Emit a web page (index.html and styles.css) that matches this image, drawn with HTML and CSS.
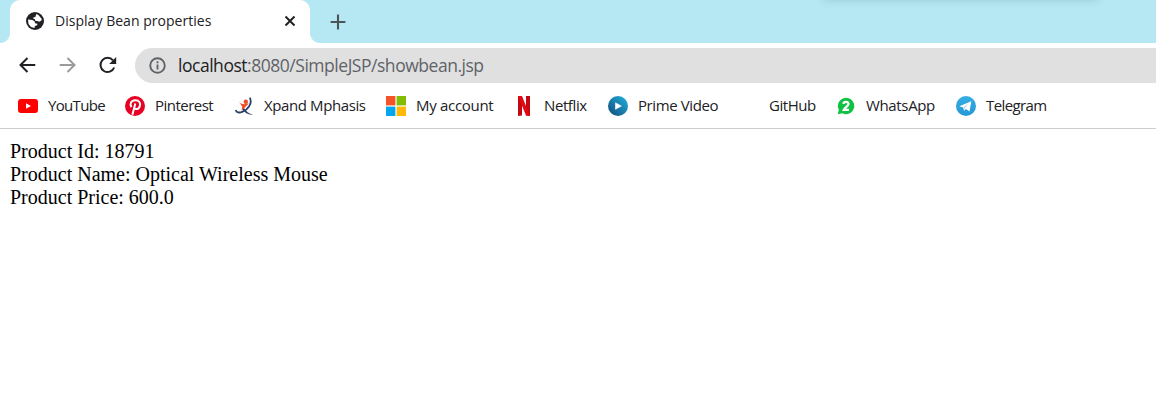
FILE: index.html
```
<!DOCTYPE html>
<html lang="en">
<head>
<meta charset="utf-8">
<title>Display Bean properties</title>
<link rel="stylesheet" href="styles.css">
</head>
<body>
<header class="tabstrip">
  <div class="tab">
    <svg class="globe" viewBox="0 0 18 18"><circle cx="9" cy="9" r="9" fill="#202124"/><path d="M10.2 2.1 12.4 3 15.8 7.1 15.4 8.4 13.2 9.8 11.2 9 9.4 8.9 8.9 7.2 7.1 6.6 7.3 5.4 9.4 5.1Z" fill="#fff"/><path d="M2 7.6 6.5 8 8.7 9.6 9.1 11.3 11.5 11.7 11.1 13.2 8.9 14.1 8.5 16.1 5 14.9 2.5 11.9Z" fill="#fff"/></svg>
    <span class="tab-title">Display Bean properties</span>
    <svg class="close" viewBox="0 0 12 12"><path d="M1.5 1.5 10.5 10.5M10.5 1.5 1.5 10.5" stroke="#202124" stroke-width="2" fill="none"/></svg>
  </div>
  <svg class="plus" viewBox="0 0 16 16"><path d="M8 .6V15.4M.6 8H15.4" stroke="#4b5557" stroke-width="2.1" fill="none"/></svg>
  <div class="shade"></div>
</header>
<div class="toolbar">
  <svg class="nav" viewBox="0 0 20 20"><path d="M18.3 10H3.5M10.5 3 3.5 10 10.5 17" stroke="#202124" stroke-width="2" fill="none"/></svg>
  <svg class="nav" viewBox="0 0 20 20"><path d="M2.7 10H17.5M10.5 3 17.5 10 10.5 17" stroke="#9b9b9d" stroke-width="2" fill="none"/></svg>
  <svg class="nav" viewBox="0 0 20 20"><path d="M17.2 12.5A7.1 7.1 0 1 1 16 5.3" stroke="#202124" stroke-width="2" fill="none"/><path d="M19.2 2V9H12.2Z" fill="#202124"/></svg>
  <div class="omnibox">
    <svg class="info" viewBox="0 0 18 18"><circle cx="9" cy="9" r="7.7" stroke="#5f6368" stroke-width="2" fill="none"/><path d="M9 8V13.2M9 4.6V6.6" stroke="#5f6368" stroke-width="2"/></svg>
    <span class="url"><b class="host">localhost</b>:8080/SimpleJSP/showbean.jsp</span>
  </div>
</div>
<nav class="bookmarks">
  <a class="bm youtube"><svg viewBox="0 0 20 20"><rect y="3" width="20" height="14" rx="3" fill="#f00"/><path d="M8 7.2V12.8L13 10Z" fill="#fff"/></svg><span>YouTube</span></a>
  <a class="bm pinterest"><svg viewBox="0 0 20 20"><circle cx="10" cy="10" r="10" fill="#e60023"/><path d="M6.5 11.2C4.2 8.2 6 4.3 10.3 4.2 14.3 4.1 15.7 7.2 14.8 10.1 13.9 13.2 11 13.9 9.4 12.1M10.3 7.6 7.4 18.8" stroke="#fff" stroke-width="2" fill="none"/></svg><span>Pinterest</span></a>
  <a class="bm xpand"><svg viewBox="0 0 20 20"><path d="M15.8 1.6C18.6 7 14.4 13.6 8.2 15.9 5.3 17 2.5 16.6 1.6 14" stroke="#2c406a" stroke-width="1.8" fill="none"/><path d="M9.6 11.4C12 15.2 14.8 17.6 19.2 18.6 15 19.4 10.6 17 8.1 13Z" fill="#2c406a"/><circle cx="11.8" cy="5.7" r="2.2" fill="#f04e23"/><path d="M4.7 5.6C6.5 7.9 8.5 8.3 10.7 8.3L14.6 7.2C13.8 9 11.8 10 11.2 11.2L7.2 14.8C8 12.8 8.5 11.3 7.9 10Z" fill="#f04e23"/></svg><span>Xpand Mphasis</span></a>
  <a class="bm account"><svg viewBox="0 0 20 20"><path d="M0 0H9.4V9.4H0Z" fill="#f35325"/><path d="M10.6 0H20V9.4H10.6Z" fill="#81bc06"/><path d="M0 10.6H9.4V20H0Z" fill="#05a6f0"/><path d="M10.6 10.6H20V20H10.6Z" fill="#ffba08"/></svg><span>My account</span></a>
  <a class="bm netflix"><svg viewBox="0 0 20 20"><path d="M4 0H8V19.5L4 20ZM12 0H16V20L12 19.5Z" fill="#c20812"/><path d="M4 0H8L16 20 12 19.5Z" fill="#e50914"/></svg><span>Netflix</span></a>
  <a class="bm prime"><svg viewBox="0 0 20 20"><defs><linearGradient id="prime" x1="1" y1="0" x2="0" y2="1"><stop offset="0" stop-color="#20b5df"/><stop offset="1" stop-color="#124878"/></linearGradient></defs><circle cx="10" cy="10" r="10" fill="url(#prime)"/><path d="M7.5 6.8V13.3L13.4 10Z" fill="#fff" stroke="#fff" stroke-width=".6" stroke-linejoin="round"/></svg><span>Prime Video</span></a>
  <a class="bm github"><svg viewBox="0 0 20 20"></svg><span>GitHub</span></a>
  <a class="bm whatsapp"><svg viewBox="0 0 20 20"><path d="M1.8 18.2 2.8 13.8A8.2 8.2 0 1 1 6.3 17.3Z" fill="#11c143"/><path d="M7.5 8C7.5 5.2 12.6 5 12.5 8 12.5 10 9 11.2 7.8 13.8H13" stroke="#fff" stroke-width="2.2" fill="none"/></svg><span>WhatsApp</span></a>
  <a class="bm telegram"><svg viewBox="0 0 20 20"><defs><linearGradient id="tg" x2="0" y2="1"><stop stop-color="#37aee2"/><stop offset="1" stop-color="#2598d6"/></linearGradient></defs><circle cx="10" cy="10" r="10" fill="url(#tg)"/><path d="M3.3 10.2 15.3 5.2 13.5 15.5 9.9 12.9 8.1 14.8 7.1 11.5Z" fill="#fff"/><path d="M7.5 11.5 13.2 7.3 8.8 12.2 8.1 14.5Z" fill="#b5d8ed"/></svg><span>Telegram</span></a>
</nav>
<main class="page">
  <div>Product Id: 18791</div>
  <div>Product Name: Optical Wireless Mouse</div>
  <div>Product Price: 600.0</div>
</main>
</body>
</html>
```
FILE: styles.css
```
body {
  margin: 0;
  height: 410px;
  overflow: hidden;
  background: #fff;
  color: #202124;
  font: 15px/20px "Open Sans", "Noto Sans", sans-serif;
  white-space: nowrap;
}
svg { display: block; flex: none; }
.tabstrip {
  position: relative;
  display: flex;
  align-items: center;
  height: 43px;
  padding-left: 10px;
  background: #b5e8f2;
  overflow: hidden;
}
.tab {
  position: relative;
  display: flex;
  align-items: center;
  box-sizing: border-box;
  width: 300px;
  height: 43px;
  padding: 0 14px 1px 16px;
  border-radius: 10px 10px 0 0;
  background: #fff;
}
.tab::before, .tab::after {
  content: "";
  position: absolute;
  bottom: 0;
  width: 10px;
  height: 10px;
}
.tab::before { left: -10px; background: radial-gradient(circle at 0 0, #b5e8f2 9.5px, #fff 10.5px); }
.tab::after { right: -10px; background: radial-gradient(circle at 100% 0, #b5e8f2 9.5px, #fff 10.5px); }
.globe { width: 18px; height: 18px; }
.tab-title { flex: 1; margin-left: 11px; font-size: 14px; letter-spacing: .03px; }
.close { width: 12px; height: 12px; }
.plus { width: 16px; height: 16px; margin-left: 19.5px; }
.shade {
  position: absolute;
  left: 824px;
  top: -10px;
  width: 274px;
  height: 10px;
  box-shadow: 0 0 9px rgba(70, 110, 120, .25);
}
.toolbar {
  display: flex;
  align-items: center;
  gap: 20px;
  height: 45px;
  padding-left: 17px;
}
.nav { width: 20px; height: 20px; margin-bottom: 2px; }
.omnibox {
  display: flex;
  align-items: center;
  flex: 1;
  height: 35px;
  margin-left: -2px;
  padding-left: 14px;
  border-radius: 18px 0 0 18px;
  background: #e0e0e0;
}
.info { width: 17px; height: 17px; }
.url { margin-left: 12px; padding-bottom: 1px; color: #5f6368; font-size: 17.5px; letter-spacing: -.47px; }
.host { color: #202124; font-weight: 400; }
.bookmarks {
  display: grid;
  grid-template-columns: 107px 109px 152px 128px 94px 131px 97px 120px auto;
  height: 36px;
  padding: 0 0 4px 18px;
  border-bottom: 1px solid #cdcdcd;
}
.bm { display: flex; align-items: center; gap: 10px; }
.bm svg { width: 20px; height: 20px; }
.bm span { padding-bottom: 2px; }
.youtube { letter-spacing: -.68px; }
.pinterest { letter-spacing: -.52px; }
.xpand { letter-spacing: -.4px; }
.account { letter-spacing: -.3px; }
.netflix { letter-spacing: -.4px; }
.prime { letter-spacing: -.4px; }
.github { letter-spacing: -.45px; }
.whatsapp { letter-spacing: -.35px; }
.telegram { letter-spacing: -.6px; }
.page {
  padding: 11px 10px;
  color: #000;
  font: 20px/23px "Liberation Serif", serif;
}
```
